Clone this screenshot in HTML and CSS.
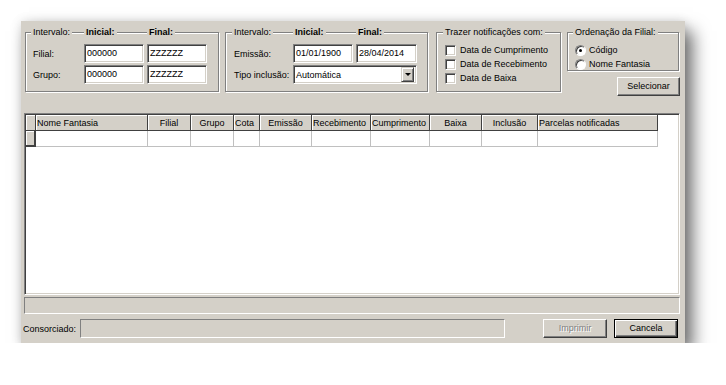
FILE: index.html
```html
<!DOCTYPE html>
<html lang="pt">
<head>
    <meta charset="UTF-8">
    <title>Notificações</title>
    <link rel="stylesheet" href="styles.css">
</head>
<body>

<div class="window">
    <div class="top">
        <div class="grp g1">
            <div class="form f1">
                <span class="cap">Intervalo:</span>
                <span class="cap b">Inicial:</span>
                <span class="cap b">Final:</span>
                <label>Filial:</label>
                <div class="edit">000000</div>
                <div class="edit">ZZZZZZ</div>
                <label>Grupo:</label>
                <div class="edit">000000</div>
                <div class="edit">ZZZZZZ</div>
            </div>
        </div>

        <div class="grp g2">
            <div class="form f2">
                <span class="cap">Intervalo:</span>
                <span class="cap b">Inicial:</span>
                <span class="cap b">Final:</span>
                <label>Emissão:</label>
                <div class="edit">01/01/1900</div>
                <div class="edit">28/04/2014</div>
                <label>Tipo inclusão:</label>
                <div class="edit combo">
                    <span>Automática</span>
                    <span class="drop"><span class="arrow"></span></span>
                </div>
            </div>
        </div>

        <div class="grp g3">
            <div class="cap">Trazer notificações com:</div>
            <div class="opts">
                <div class="opt"><span class="check"></span>Data de Cumprimento</div>
                <div class="opt"><span class="check"></span>Data de Recebimento</div>
                <div class="opt"><span class="check"></span>Data de Baixa</div>
            </div>
        </div>

        <div class="col4">
            <div class="grp g4">
                <div class="cap">Ordenação da Filial:</div>
                <div class="opts">
                    <div class="opt"><span class="radio on"></span>Código</div>
                    <div class="opt"><span class="radio"></span>Nome Fantasia</div>
                </div>
            </div>
            <div class="btn sel">Selecionar</div>
        </div>
    </div>

    <div class="grid">
        <table>
            <colgroup>
                <col class="c-ind">
                <col class="c-nome">
                <col class="c-filial">
                <col class="c-grupo">
                <col class="c-cota">
                <col class="c-emissao">
                <col class="c-receb">
                <col class="c-cumpr">
                <col class="c-baixa">
                <col class="c-incl">
                <col class="c-parc">
            </colgroup>
            <thead>
                <tr>
                    <th class="ind"></th>
                    <th class="left">Nome Fantasia</th>
                    <th>Filial</th>
                    <th>Grupo</th>
                    <th class="left">Cota</th>
                    <th>Emissão</th>
                    <th class="left">Recebimento</th>
                    <th class="left">Cumprimento</th>
                    <th>Baixa</th>
                    <th>Inclusão</th>
                    <th class="left">Parcelas notificadas</th>
                </tr>
            </thead>
            <tbody>
                <tr>
                    <td class="ind"></td>
                    <td></td><td></td><td></td><td></td><td></td>
                    <td></td><td></td><td></td><td></td><td></td>
                </tr>
            </tbody>
        </table>
    </div>

    <div class="status"></div>

    <div class="bottom">
        <label>Consorciado:</label>
        <div class="edit off"></div>
        <div class="btn disabled">Imprimir</div>
        <div class="btn def">Cancela</div>
    </div>
</div>

</body>
</html>
```

FILE: styles.css
```css
body {
    margin: 0;
    background: #fff;
    font-family: "Liberation Sans", Arial, sans-serif;
    font-size: 9px;
    color: #000;
}
.window {
    width: 664px;
    height: 322px;
    margin: 21px 0 0 21px;
    box-sizing: border-box;
    padding: 11px 5px 5px 3px;
    background: #d4d0c8;
    box-shadow: 8px 10px 16px rgba(0, 0, 0, 0.55), 0 0 10px rgba(0, 0, 0, 0.12);
    display: flex;
    flex-direction: column;
}

/* top area */
.top {
    display: flex;
    align-items: flex-start;
    height: 63px;
    margin-left: 1px;
}
.grp {
    box-sizing: border-box;
    border: 1px solid #808080;
    box-shadow: inset 1px 1px #fff, 1px 1px #fff;
    height: 60px;
}
.cap {
    justify-self: start;
    align-self: start;
    display: block;
    width: fit-content;
    line-height: 11px;
    height: 11px;
    margin-left: -2px;
    padding: 0 2px;
    background: #d4d0c8;
    white-space: nowrap;
}
.cap.b {
    font-weight: bold;
    margin-left: 0;
}
.form {
    display: grid;
    margin-top: -6px;
    row-gap: 2px;
    column-gap: 3px;
    align-items: center;
}
.form .cap {
    margin-bottom: 4px;
}
.g1 {
    width: 194px;
    padding-left: 7px;
}
.f1 {
    grid-template-columns: 48px 60px 60px;
}
.g2 {
    width: 203px;
    margin-left: 6px;
    padding-left: 8px;
}
.f2 {
    grid-template-columns: 56px 60px 61px;
}
.combo {
    grid-column: span 2;
    display: flex;
    justify-content: space-between;
    align-items: center;
}
.edit {
    box-sizing: border-box;
    height: 19px;
    line-height: 15px;
    padding: 1px 1px 0 2px;
    background: #fff;
    border: 1px solid;
    border-color: #808080 #fff #fff #808080;
    box-shadow: inset 1px 1px #404040, inset -1px -1px #d4d0c8;
    white-space: nowrap;
}
.drop {
    width: 13px;
    height: 15px;
    margin: -1px 1px 0 0;
    box-sizing: border-box;
    background: #d4d0c8;
    border: 1px solid;
    border-color: #d4d0c8 #404040 #404040 #d4d0c8;
    box-shadow: inset 1px 1px #fff, inset -1px -1px #808080;
    display: flex;
    align-items: center;
    justify-content: center;
}
.arrow {
    width: 0;
    height: 0;
    border-left: 3px solid transparent;
    border-right: 3px solid transparent;
    border-top: 3px solid #000;
}
.g3 {
    width: 125px;
    margin-left: 8px;
    padding-left: 8px;
}
.g3 > .cap,
.g4 > .cap {
    margin-top: -6px;
}
.opts {
    margin-top: 5px;
}
.opt {
    display: flex;
    align-items: center;
    height: 14px;
    white-space: nowrap;
}
.check {
    width: 11px;
    height: 11px;
    box-sizing: border-box;
    margin-right: 4px;
    background: #fff;
    border: 1px solid;
    border-color: #808080 #fff #fff #808080;
    box-shadow: inset 1px 1px #404040, inset -1px -1px #d4d0c8;
}
.col4 {
    width: 113px;
    margin-left: 6px;
    display: flex;
    flex-direction: column;
    align-items: flex-end;
}
.g4 {
    align-self: flex-start;
    width: 112px;
    height: 39px;
    padding-left: 7px;
}
.radio {
    width: 11px;
    height: 11px;
    box-sizing: border-box;
    margin-right: 3px;
    border-radius: 50%;
    background: #fff;
    border: 1px solid;
    border-color: #808080 #fff #fff #808080;
    box-shadow: inset 1px 1px #404040;
    display: flex;
    align-items: center;
    justify-content: center;
}
.radio.on::after {
    content: "";
    width: 3px;
    height: 3px;
    border-radius: 50%;
    background: #000;
}

/* buttons */
.btn {
    box-sizing: border-box;
    width: 64px;
    height: 19px;
    line-height: 17px;
    text-align: center;
    background: #d4d0c8;
    border: 1px solid;
    border-color: #fff #404040 #404040 #fff;
    box-shadow: inset -1px -1px #808080;
}
.btn.sel {
    width: 63px;
    margin-top: 6px;
}
.btn.disabled {
    margin-left: auto;
    color: #808080;
    text-shadow: 1px 1px #fff;
}
.btn.def {
    margin-left: 7px;
    margin-right: 2px;
    border-color: #000;
    box-shadow: inset 1px 1px #fff, inset -1px -1px #404040, inset -2px -2px #808080;
}

/* grid */
.grid {
    box-sizing: border-box;
    height: 182px;
    margin-top: 18px;
    background: #fff;
    border: 1px solid;
    border-color: #808080 #fff #fff #808080;
    box-shadow: inset 1px 1px #404040, inset -1px -1px #d4d0c8;
    padding: 1px;
}
table {
    table-layout: fixed;
    width: 632px;
    border-collapse: separate;
    border-spacing: 0;
}
.c-ind { width: 10px; }
.c-nome { width: 112px; }
.c-filial { width: 43px; }
.c-grupo { width: 43px; }
.c-cota { width: 26px; }
.c-emissao { width: 52px; }
.c-receb { width: 59px; }
.c-cumpr { width: 59px; }
.c-baixa { width: 52px; }
.c-incl { width: 56px; }
.c-parc { width: 120px; }
th, td {
    box-sizing: border-box;
    height: 16px;
    padding: 0 1px;
    white-space: nowrap;
    overflow: hidden;
}
th {
    font-weight: normal;
    text-align: center;
    background: #d4d0c8;
    border-right: 1px solid #404040;
    border-bottom: 1px solid #404040;
    box-shadow: inset 1px 1px #fff;
}
th.left {
    text-align: left;
}
td {
    border-right: 1px solid #c0c0c0;
    border-bottom: 1px solid #c0c0c0;
}
td.ind {
    background: #d4d0c8;
    border-right: 2px solid #404040;
    border-bottom: 2px solid #404040;
    box-shadow: inset 1px 1px #fff;
}

/* status and bottom */
.status {
    box-sizing: border-box;
    height: 17px;
    margin-top: 2px;
    border: 1px solid;
    border-color: #808080 #fff #fff #808080;
}
.bottom {
    display: flex;
    align-items: center;
    height: 19px;
    margin-top: 5px;
}
.bottom label {
    width: 57px;
    margin-left: -1px;
}
.edit.off {
    width: 425px;
    background: #d4d0c8;
    box-shadow: none;
}
```
